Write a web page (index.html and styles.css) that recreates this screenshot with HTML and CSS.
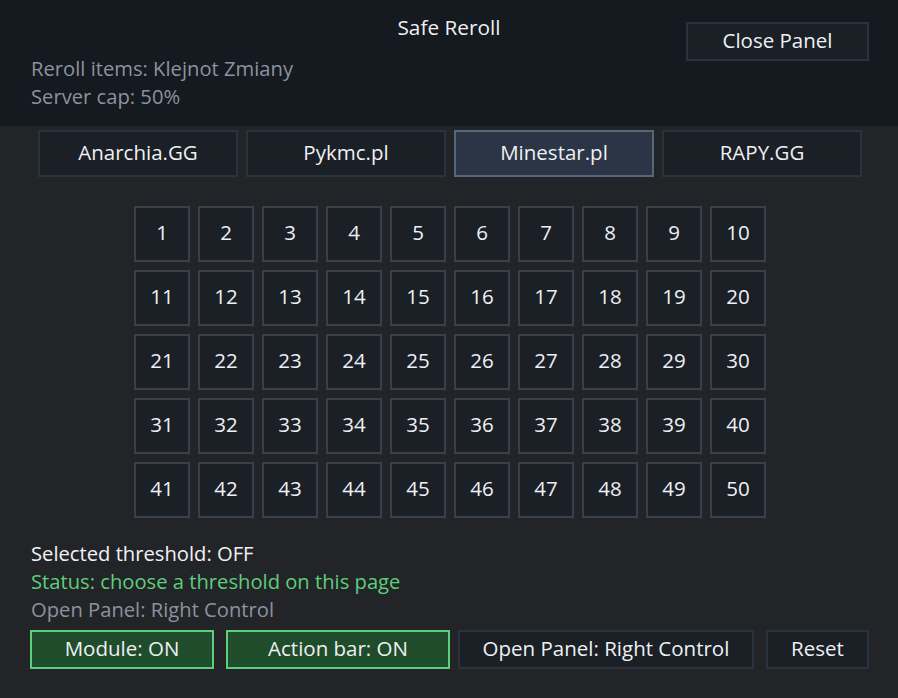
FILE: index.html
```html
<!DOCTYPE html>
<html lang="pl">
<head>
<meta charset="utf-8">
<title>Safe Reroll</title>
<link rel="stylesheet" href="styles.css">
</head>
<body>
<div class="panel">
  <header class="head">
    <div class="head-info">
      <div class="info-line">Reroll items: Klejnot Zmiany</div>
      <div class="info-line">Server cap: 50%</div>
    </div>
    <div class="title">Safe Reroll</div>
    <button class="btn close-btn">Close Panel</button>
  </header>

  <nav class="tabs">
    <button class="btn tab">Anarchia.GG</button>
    <button class="btn tab">Pykmc.pl</button>
    <button class="btn tab tab-active">Minestar.pl</button>
    <button class="btn tab">RAPY.GG</button>
  </nav>

  <div class="grid" id="grid"></div>

  <div class="status">
    <div class="status-line sel">Selected threshold: OFF</div>
    <div class="status-line ok">Status: choose a threshold on this page</div>
    <div class="status-line muted">Open Panel: Right Control</div>
  </div>

  <div class="actions">
    <button class="btn on act-module">Module: ON</button>
    <button class="btn on act-bar">Action bar: ON</button>
    <button class="btn act-key">Open Panel: Right Control</button>
    <button class="btn act-reset">Reset</button>
  </div>
</div>
<script src="app.js"></script>
</body>
</html>
```

FILE: app.js
```js
// Threshold cells 1..50
const grid = document.getElementById('grid');
for (let i = 1; i <= 50; i++) {
  const b = document.createElement('button');
  b.className = 'btn cell';
  b.textContent = i;
  grid.appendChild(b);
}
```

FILE: styles.css
```css
* { box-sizing: border-box; }
html, body { margin: 0; padding: 0; }
body {
  width: 898px;
  height: 698px;
  background: #232428;
  font-family: "Open Sans", "Noto Sans", sans-serif;
  color: #eef0f3;
  overflow: hidden;
}
.panel { display: flex; flex-direction: column; height: 100%; }

.btn {
  font-family: inherit;
  color: #eef0f3;
  background: #1b1f26;
  border: 2px solid #2a323e;
  font-size: 20.5px;
  padding: 0 0 4px;
  margin: 0;
  display: flex;
  align-items: center;
  justify-content: center;
}

/* header */
.head {
  background: #151920;
  height: 126px;
  position: relative;
  padding: 54px 31px 0;
}
.title {
  position: absolute;
  left: 0; right: 0; top: 14px;
  text-align: center;
  font-size: 20.8px;
  line-height: 26px;
}
.info-line {
  color: #8b939f;
  font-size: 20.2px;
  line-height: 28px;
}
.close-btn {
  position: absolute;
  left: 686px; top: 22px;
  width: 183px; height: 39px;
}

/* server tabs */
.tabs {
  display: flex;
  gap: 8px;
  padding: 4px 0 0 38px;
}
.tab { width: 200px; height: 47px; }
.tab-active { background: #2b3545; border-color: #56657a; }

/* threshold grid */
.grid {
  display: grid;
  grid-template-columns: repeat(10, 56px);
  grid-auto-rows: 56px;
  gap: 8px;
  justify-content: center;
  margin-top: 29px;
  padding-left: 2px;
}
.cell { border-color: #3a404b; }

/* status */
.status { padding: 21px 31px 0; }
.status-line { font-size: 20.2px; line-height: 28px; }
.sel { color: #f0f2f5; }
.ok { color: #5ccf7a; }
.muted { color: #8b939f; }

/* bottom actions */
.actions {
  display: flex;
  padding: 7px 0 0 30px;
}
.actions .btn { height: 39px; }
.on { background: #1f4d2b; border-color: #5ccf7a; }
.act-module { width: 184px; margin-right: 12px; }
.act-bar { width: 224px; margin-right: 8px; }
.act-key { width: 296px; margin-right: 12px; }
.act-reset { width: 103px; }
```
